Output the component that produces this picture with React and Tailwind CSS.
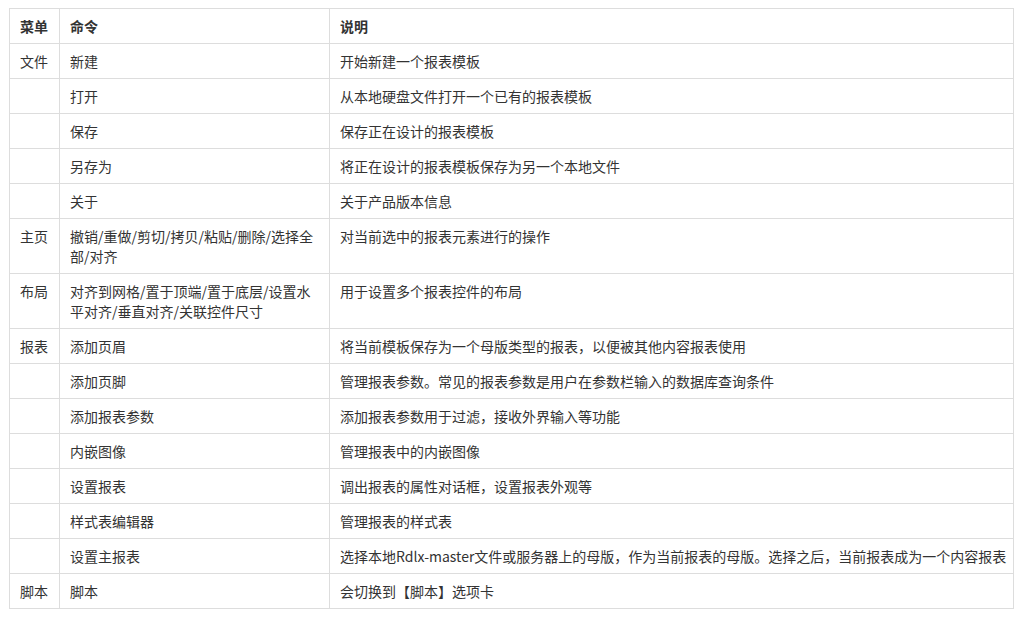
import React from 'react';

const rows = [
  ['文件', '新建', '开始新建一个报表模板'],
  ['', '打开', '从本地硬盘文件打开一个已有的报表模板'],
  ['', '保存', '保存正在设计的报表模板'],
  ['', '另存为', '将正在设计的报表模板保存为另一个本地文件'],
  ['', '关于', '关于产品版本信息'],
  ['主页', ['撤销/重做/剪切/拷贝/粘贴/删除/选择全', '部/对齐'], '对当前选中的报表元素进行的操作'],
  ['布局', ['对齐到网格/置于顶端/置于底层/设置水', '平对齐/垂直对齐/关联控件尺寸'], '用于设置多个报表控件的布局'],
  ['报表', '添加页眉', '将当前模板保存为一个母版类型的报表，以便被其他内容报表使用'],
  ['', '添加页脚', '管理报表参数。常见的报表参数是用户在参数栏输入的数据库查询条件'],
  ['', '添加报表参数', '添加报表参数用于过滤，接收外界输入等功能'],
  ['', '内嵌图像', '管理报表中的内嵌图像'],
  ['', '设置报表', '调出报表的属性对话框，设置报表外观等'],
  ['', '样式表编辑器', '管理报表的样式表'],
  ['', '设置主报表', '选择本地Rdlx-master文件或服务器上的母版，作为当前报表的母版。选择之后，当前报表成为一个内容报表'],
  ['脚本', '脚本', '会切换到【脚本】选项卡'],
];

const cell = 'border border-[#dddddd] px-[10px] py-[7px] align-top text-left';

export default function App() {
  return (
    <div
      className="min-h-screen bg-white pt-2 pl-[9px] text-[14px] leading-5 text-[#333333]"
      style={{ fontFamily: '"Noto Sans CJK SC", "Liberation Sans", sans-serif' }}
    >
      <table className="w-[1004px] table-fixed border-collapse">
        <colgroup>
          <col className="w-[50px]" />
          <col className="w-[270px]" />
          <col className="w-[684px]" />
        </colgroup>
        <thead>
          <tr>
            <th className={cell + ' font-bold'}>菜单</th>
            <th className={cell + ' font-bold'}>命令</th>
            <th className={cell + ' font-bold'}>说明</th>
          </tr>
        </thead>
        <tbody>
          {rows.map(([menu, cmd, desc], i) => (
            <tr key={i}>
              <td className={cell}>{menu}</td>
              <td className={cell}>
                {Array.isArray(cmd) ? (
                  <>
                    {cmd[0]}
                    <br />
                    {cmd[1]}
                  </>
                ) : (
                  cmd
                )}
              </td>
              <td className={cell + ' whitespace-nowrap'}>{desc}</td>
            </tr>
          ))}
        </tbody>
      </table>
    </div>
  );
}
